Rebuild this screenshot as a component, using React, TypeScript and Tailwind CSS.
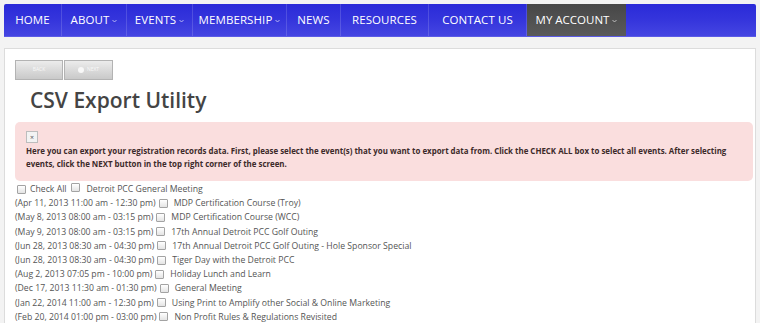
const navItems = [
  { label: "HOME", w: "w-[58px]", caret: false },
  { label: "ABOUT", w: "w-[65px]", caret: true },
  { label: "EVENTS", w: "w-[66px]", caret: true },
  { label: "MEMBERSHIP", w: "w-[94px]", caret: true },
  { label: "NEWS", w: "w-[54px]", caret: false },
  { label: "RESOURCES", w: "w-[88px]", caret: false },
  { label: "CONTACT US", w: "w-[98px]", caret: false },
];

const events = [
  { date: "(Apr 11, 2013 11:00 am - 12:30 pm)", title: "MDP Certification Course (Troy)" },
  { date: "(May 8, 2013 08:00 am - 03:15 pm)", title: "MDP Certification Course (WCC)" },
  { date: "(May 9, 2013 08:00 am - 03:15 pm)", title: "17th Annual Detroit PCC Golf Outing" },
  { date: "(Jun 28, 2013 08:30 am - 04:30 pm)", title: "17th Annual Detroit PCC Golf Outing - Hole Sponsor Special" },
  { date: "(Jun 28, 2013 08:30 am - 04:30 pm)", title: "Tiger Day with the Detroit PCC" },
  { date: "(Aug 2, 2013 07:05 pm - 10:00 pm)", title: "Holiday Lunch and Learn" },
  { date: "(Dec 17, 2013 11:30 am - 01:30 pm)", title: "General Meeting" },
  { date: "(Jan 22, 2014 11:00 am - 12:30 pm)", title: "Using Print to Amplify other Social & Online Marketing" },
  { date: "(Feb 20, 2014 01:00 pm - 03:00 pm)", title: "Non Profit Rules & Regulations Revisited" },
];

function Caret() {
  return (
    <svg width="5" height="4" viewBox="0 0 5 4" className="ml-[3px] mt-[1px] opacity-70">
      <path d="M0.5 1 L2.5 3 L4.5 1" stroke="white" strokeWidth="0.9" fill="none" />
    </svg>
  );
}

function Box() {
  return (
    <span className="inline-block w-[9px] h-[9px] rounded-[1px] border border-[#a3a3a3] bg-gradient-to-b from-white to-[#e4e4e4] shrink-0" />
  );
}

export default function App() {
  return (
    <div className="min-h-screen bg-[#f3f3f3] pt-1 px-1 font-['Open_Sans',sans-serif] overflow-hidden">
      {/* Navigation */}
      <nav className="h-[33px] flex bg-gradient-to-b from-[#2a2ad8] via-[#3535dc] to-[#4545e2] border-b border-[#5b5be6] rounded-t-[2px]">
        {navItems.map((item) => (
          <div
            key={item.label}
            className={`${item.w} flex items-center justify-center border-r border-white/15 text-white text-[11.5px] tracking-[0.1px]`}
          >
            {item.label}
            {item.caret && <Caret />}
          </div>
        ))}
        <div className="w-[99px] flex items-center justify-center bg-gradient-to-b from-[#474747] to-[#5a5a5a] text-white text-[11.5px]">
          MY ACCOUNT
          <Caret />
        </div>
      </nav>

      {/* Content panel */}
      <div className="mt-[11px] bg-white border border-[#dcdcdc] min-h-[300px] pl-[10px] pr-[2px] pt-[11px]">
        <div className="flex">
          <button className="w-[48px] h-[20px] bg-gradient-to-b from-[#ececec] to-[#c9c9c9] border border-[#b3b3b3] text-[5px] text-[#f8f8f8] flex items-center justify-center">
            BACK
          </button>
          <button className="ml-[1px] w-[49px] h-[20px] bg-gradient-to-b from-[#ececec] to-[#c9c9c9] border border-[#b3b3b3] text-[5px] text-[#f8f8f8] flex items-center justify-center gap-[3px]">
            <span className="inline-block w-[6px] h-[6px] rounded-full bg-[#f8f8f8]" />
            NEXT
          </button>
        </div>

        <h1 className="mt-[7px] ml-[15px] text-[21px] leading-[26px] font-semibold text-[#444]">
          CSV Export Utility
        </h1>

        <div className="mt-[9px] w-[738px] h-[59px] rounded-[5px] bg-[#fadede] px-[11px] pt-[9px]">
          <div className="w-[12px] h-[12px] border border-[#bdbdbd] bg-[#f3f3f3] flex items-center justify-center text-[7px] leading-none text-[#555]">
            ×
          </div>
          <p className="mt-[2px] text-[7.9px] leading-[13px] font-bold text-[#3c2a2a]">
            <span className="block whitespace-nowrap">
              Here you can export your registration records data. First, please select the event(s) that you want to export data from. Click the CHECK ALL box to select all events. After selecting
            </span>
            <span className="block whitespace-nowrap">
              events, click the NEXT button in the top right corner of the screen.
            </span>
          </p>
        </div>

        <div className="mt-[1px] text-[8.7px] leading-[14.2px] text-[#555]">
          <div className="flex items-center pl-[2px]">
            <Box />
            <span className="ml-[4px]">Check All</span>
            <span className="ml-[4px]">
              <Box />
            </span>
            <span className="ml-[7px]">Detroit PCC General Meeting</span>
          </div>
          {events.map((e, i) => (
            <div key={i} className="flex items-center">
              <span>{e.date}</span>
              <span className="ml-[3px] flex">
                <Box />
              </span>
              <span className="ml-[6px]">{e.title}</span>
            </div>
          ))}
        </div>
      </div>
    </div>
  );
}
